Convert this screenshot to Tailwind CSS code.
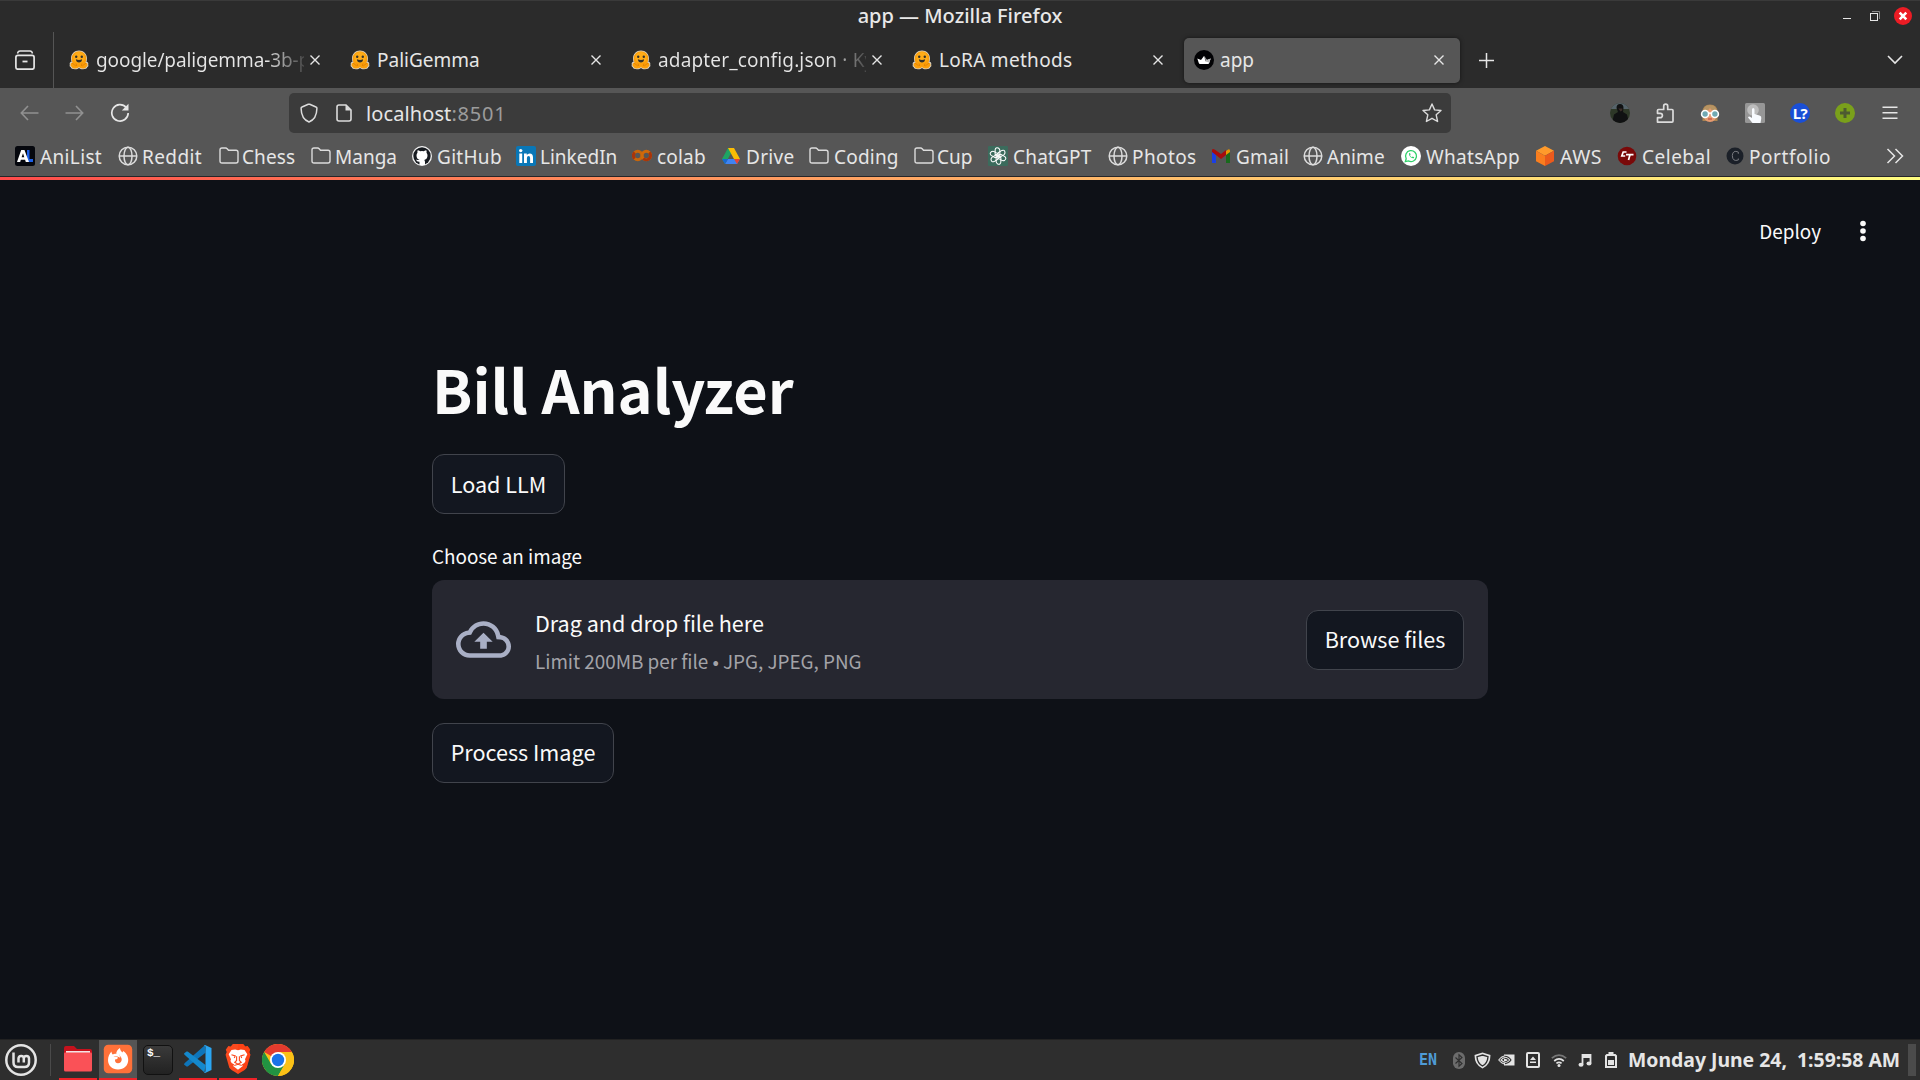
<!DOCTYPE html>
<html lang="en">
<head>
<meta charset="utf-8">
<title>app</title>
<script src="https://cdn.jsdelivr.net/npm/@tailwindcss/browser@4"></script>
</head>
<body class="h-[1080px] w-[1920px] overflow-hidden bg-[#0e1117] font-['Noto_Sans',sans-serif] text-[19px] text-[#e6e6e6]">

<!-- shared icons -->
<svg class="hidden">
  <symbol id="hug" viewBox="0 0 20 20">
    <path d="M10 .5C5.500.5 2 4 2 8.500c0 1.500.3 2.600.5 3.300C1 12 .3 13.500.8 14.700c-.5 1 0 2 .8 2.300.3 1.500 2 2.200 4.400 2.300 1.500.1 3-.3 4-1.200 1 .9 2.500 1.300 4 1.200 2.400-.1 4.100-.8 4.400-2.300.8-.3 1.300-1.300.8-2.300.5-1.200-.2-2.700-1.700-2.900.2-.7.5-1.800.5-3.300C18 4 14.500.5 10 .5z" fill="#d8d0c0"/>
    <path d="M10 1.200a7.300 7.300 0 0 0-7.300 7.300c0 2 .5 3.500 1 4.300C2.300 12.200 1.200 13.700 1.700 15c-.5.700.2 1.600 1 1.700.1 1.300 1.600 1.700 3.500 1.800 2 0 3.200-.6 3.800-1.700.6 1.100 1.800 1.700 3.800 1.700 1.900-.1 3.400-.5 3.500-1.800.8-.1 1.500-1 1-1.700.5-1.300-.6-2.800-2-2.200.5-.8 1-2.300 1-4.300A7.300 7.300 0 0 0 10 1.200z" fill="#fb9f0b"/>
    <circle cx="10" cy="7.600" r="5.600" fill="#ffac18"/>
    <circle cx="7.200" cy="6.800" r="1.200" fill="#33302a"/><circle cx="12.800" cy="6.800" r="1.200" fill="#33302a"/>
    <path d="M6.900 9.200c2 .9 4.200.9 6.200 0 0 2-1.400 3.300-3.100 3.300s-3.100-1.300-3.100-3.300z" fill="#33302a"/>
    <path d="M3 13l3.800 3M17 13l-3.800 3M7 13.500l.7 2.500M13 13.500l-.7 2.500" stroke="#e07d00" stroke-width=".8" fill="none"/>
  </symbol>
  <symbol id="close" viewBox="0 0 12 12"><path d="M1.500 1.500l9 9m0-9l-9 9" stroke="#e6e6e6" stroke-width="1.400" fill="none"/></symbol>
  <symbol id="folder" viewBox="0 0 20 20"><path d="M1 15V4q0-2 2-2h3.600q1 0 1.600.8L9.500 4.300H17q2 0 2 2V15q0 2-2 2H3q-2 0-2-2z" fill="none" stroke="#dcdcdc" stroke-width="1.400"/></symbol>
  <symbol id="globe" viewBox="0 0 20 20"><g fill="none" stroke="#dcdcdc" stroke-width="1.500"><circle cx="10" cy="10" r="8.800"/><ellipse cx="10" cy="10" rx="4" ry="8.800"/><path d="M1.200 10h17.600"/></g></symbol>
</svg>

<!-- window title -->
<div class="relative flex h-8 items-center justify-center border-t border-[#3a3a3a] bg-[#2b2b2b]">
  <div class="-mt-[2px] text-[20px] leading-7 font-medium text-[#e8e8e8]">app — Mozilla Firefox</div>
  <svg class="absolute top-0 right-0" width="90" height="32" viewBox="1830 1 90 32">
    <path d="M1843 18.500h8" stroke="#e6e6e6"/>
    <path d="M1872 11.500h7.500v7.500" stroke="#888" fill="none"/><rect x="1870.500" y="13.500" width="7" height="7" fill="none" stroke="#e6e6e6"/>
    <circle cx="1903" cy="16" r="9" fill="#ec1c24"/><path d="M1899.700 12.700l6.600 6.600m0-6.600l-6.600 6.600" stroke="#fff" stroke-width="2.600"/>
  </svg>
</div>

<!-- tabs -->
<div class="flex h-14 bg-[#2b2b2b]">
  <div class="flex w-[54px] items-center border-r border-[#555] pl-[15px]">
    <svg width="20" height="20" viewBox="0 0 20 20" fill="none" stroke="#e6e6e6" stroke-width="1.700"><rect x=".9" y="5.400" width="18.200" height="13.800" rx="2"/><path d="M2.500 3.500Q3 1 5 1h10q2 0 2.500 2.500" stroke-width="1.400"/><path d="M7.500 11.500h5" stroke-width="1.800"/></svg>
  </div>
  <div class="ml-[6px] flex h-[45px] w-[1400px] gap-[5px] self-center">
    <div class="flex w-[276px] items-center pr-[15px] pl-[9px]"><svg class="size-5 shrink-0"><use href="#hug"/></svg><span class="ml-[7px] w-[208px] overflow-hidden bg-linear-to-r from-[#e6e6e6] from-82% to-[#2b2b2b] to-104% bg-clip-text whitespace-nowrap tracking-[-0.1px] text-transparent">google/paligemma-3b-p</span><svg class="ml-[5px] size-3 shrink-0"><use href="#close"/></svg></div>
    <div class="flex w-[276px] items-center pr-[15px] pl-[9px]"><svg class="size-5 shrink-0"><use href="#hug"/></svg><span class="ml-[7px] w-[208px]">PaliGemma</span><svg class="ml-[6px] size-3 shrink-0"><use href="#close"/></svg></div>
    <div class="flex w-[276px] items-center pr-[15px] pl-[9px]"><svg class="size-5 shrink-0"><use href="#hug"/></svg><span class="ml-[7px] w-[209px] overflow-hidden bg-linear-to-r from-[#e6e6e6] from-82% to-[#2b2b2b] to-104% bg-clip-text whitespace-nowrap tracking-[0.15px] text-transparent">adapter_config.json · Ky</span><svg class="ml-[5px] size-3 shrink-0"><use href="#close"/></svg></div>
    <div class="flex w-[276px] items-center pr-[15px] pl-[9px]"><svg class="size-5 shrink-0"><use href="#hug"/></svg><span class="ml-[7px] w-[208px] tracking-[0.3px]">LoRA methods</span><svg class="ml-[6px] size-3 shrink-0"><use href="#close"/></svg></div>
    <div class="flex w-[276px] items-center rounded-[5px] bg-[#565656] pr-[15px] pl-[10px] shadow-[0_0_4px_#0008]">
      <svg class="size-5 shrink-0" viewBox="0 0 20 20"><circle cx="10" cy="10" r="10" fill="#020204"/><path d="M3.300 8.500L7 10l3-4 3 4 3.700-1.500-1.500 4.600q-.2.900-1.300.9H6.100q-1.100 0-1.300-.9z" fill="#fff"/><path d="M10 6l3 4-1.500 1.500z" fill="#777"/><path d="M16.700 8.500L13 10l-1.500 1.500 3.700 1z" fill="#bbb"/></svg>
      <span class="ml-[6px] w-[209px]">app</span><svg class="ml-[4px] size-3 shrink-0"><use href="#close"/></svg></div>
  </div>
  <div class="flex grow items-center justify-between pr-[17px] pl-[18px]">
    <svg width="17" height="17" viewBox="0 0 17 17" stroke="#e6e6e6" stroke-width="1.500"><path d="M8.500 1v15M1 8.500h15"/></svg>
    <svg width="16" height="10" viewBox="0 0 16 10" fill="none" stroke="#e6e6e6" stroke-width="1.600"><path d="M1 1l7 7 7-7"/></svg>
  </div>
</div>

<!-- toolbar -->
<div class="flex h-[49px] items-center bg-[#565656] pl-[20px]">
  <div class="flex w-[269px] items-center">
    <svg width="19" height="16" viewBox="0 0 19 16" fill="none" stroke="#919191" stroke-width="1.600"><path d="M18.500 8H1.500M8 1L1.300 8 8 15"/></svg>
    <svg class="ml-[26px]" width="19" height="16" viewBox="0 0 19 16" fill="none" stroke="#919191" stroke-width="1.600"><path d="M.5 8h17M11 1l6.700 7L11 15"/></svg>
    <svg class="ml-[26px]" width="20" height="20" viewBox="0 0 20 20" fill="none" stroke="#e6e6e6" stroke-width="1.700"><path d="M16.200 4.500A8.200 8.200 0 1 0 18.200 10"/><path d="M18.500.8v6.700h-6.700z" fill="#e6e6e6" stroke="none"/></svg>
  </div>
  <div class="flex h-10 w-[1162px] items-center rounded-[5px] bg-[#3b3b3b] pr-[9px] pl-[10px]">
    <svg width="20" height="20" viewBox="0 0 20 20" fill="none" stroke="#dcdcdc" stroke-width="1.500"><path d="M9.300 1.300Q10 1 10.700 1.300L17 4q1 .4.900 1.500C17.800 12 15 17 10 19 5 17 2.200 12 2.100 5.500 2 4.400 3 4 3 4z" stroke-linejoin="round"/></svg>
    <svg class="ml-[17px]" width="16" height="18" viewBox="0 0 16 18" fill="none" stroke="#dcdcdc" stroke-width="1.600"><path d="M3 1h7l5 5v9q0 2-2 2H3q-2 0-2-2V3q0-2 2-2z"/><path d="M9.500 1v5.500H15z" fill="#dcdcdc" stroke="none"/></svg>
    <span class="ml-[14px] pt-[2px] text-[20px] tracking-[0.1px]">localhost<span class="tracking-[0.8px] text-[#9c9c9c]">:8501</span></span>
    <svg class="ml-auto" width="20" height="20" viewBox="0 0 20 20" fill="none" stroke="#dcdcdc" stroke-width="1.400" stroke-linejoin="round"><path d="M10 1l2.600 5.900 6.400.6-4.800 4.300 1.400 6.700L10 15.300l-5.600 3.200 1.400-6.700L1 7.500l6.400-.6z"/></svg>
  </div>
  <div class="flex items-center gap-[25px] pl-[159px]">
    <svg width="20" height="20" viewBox="0 0 20 20"><clipPath id="av"><circle cx="10" cy="10" r="10"/></clipPath><g clip-path="url(#av)"><path d="M0 0h20v20H0z" fill="#2d3727"/><path d="M0 0h20v6H0z" fill="#56636a"/><path d="M2 20l2-8.500 4-2.500L6.500 5q0-4 3.500-4t3.500 4L13 9l4 2.500L19 20z" fill="#101112"/><path d="M8.300 5.500h4v2l-1.800 1z" fill="#3a2d28"/></g></svg>
    <svg width="20" height="20" viewBox="0 0 20 20" fill="none" stroke="#dcdcdc" stroke-width="1.700" stroke-linejoin="round"><path d="M2.500 19.100V14.700H5.200a2.200 2.200 0 0 0 0-4.400H2.500V7.500Q2.500 6.500 3.500 6.500H8.700V3.200a2 2 0 0 1 4 0V6.500H17q1 0 1 1V18q0 1.100-1 1.100z"/></svg>
    <svg width="20" height="20" viewBox="0 0 20 20"><path d="M2.500 18V9q0-7.500 7.500-7.500T17.500 9v9z" fill="#a98352"/><ellipse cx="10" cy="11.500" rx="7" ry="7.500" fill="#e59a70"/><path d="M3 9q.5-7 7-7t7 7q-5-.5-7-4-2 3.500-7 4z" fill="#b79463"/><g fill="#70a9b3" stroke="#fff" stroke-width="1.600"><circle cx="5.100" cy="11" r="3.500"/><circle cx="14.900" cy="11" r="3.500"/></g><path d="M8.300 10.500q1.700-1 3.400 0" stroke="#fff" stroke-width="1.500" fill="none"/><path d="M8 16h4" stroke="#c24c42" stroke-width="1.200"/></svg>
    <svg width="20" height="20" viewBox="0 0 20 20"><rect width="20" height="20" rx="1.500" fill="#969696"/><circle cx="8" cy="7" r="5.800" fill="#bdbdbd"/><path d="M7 6.500q0-1.500 1.200-1.500t1.300 1.500V11l5 1.500q2.200.7 1.800 2.800L15.500 20H7.500L3 14.500q.5-1.500 2-.8l2 1.300z" fill="#f8fbff"/></svg>
    <div class="flex size-5 items-center justify-center rounded-full bg-[#1a4fd6] text-[15px] leading-5 font-bold tracking-[-0.5px] text-white">L?</div>
    <svg width="20" height="20" viewBox="0 0 20 20"><circle cx="10" cy="10" r="10" fill="#7aa01b"/><path d="M10 5v10M5 10h10" stroke="#4d5a31" stroke-width="3"/></svg>
    <svg width="20" height="20" viewBox="0 0 20 20" stroke="#e6e6e6" stroke-width="1.600"><path d="M2.500 4.200h15M2.500 9.700h15M2.500 15.200h15"/></svg>
  </div>
</div>

<!-- bookmarks -->
<div class="flex h-[39px] items-center bg-[#565656] pb-[1px] pl-[15px] whitespace-nowrap [&_span]:pt-[2px]">
  <div class="flex w-[103px] items-center gap-[5px]"><svg class="size-5" viewBox="0 0 20 20"><rect width="20" height="20" rx="2.500" fill="#05070d"/><path d="M12 4h2.500v9H18v3h-6z" fill="#1c60e8"/><path d="M2 16L6.200 4H9.500L14 16h-3.200l-.7-2.200H5.800L5.200 16zM6.600 11.300h2.700L8 7.200z" fill="#fff"/></svg><span class="tracking-[0.35px]">AniList</span></div>
  <div class="flex w-[101px] items-center gap-[4px]"><svg class="size-5"><use href="#globe"/></svg><span class="tracking-[0.4px]">Reddit</span></div>
  <div class="flex w-[92px] items-center gap-[3px]"><svg class="size-5"><use href="#folder"/></svg><span class="tracking-[0.1px]">Chess</span></div>
  <div class="flex w-[101px] items-center gap-[4px]"><svg class="size-5"><use href="#folder"/></svg><span>Manga</span></div>
  <div class="flex w-[104px] items-center gap-[5px]"><svg class="size-5" viewBox="0 0 20 20"><circle cx="10" cy="10" r="10" fill="#f2f2f2"/><circle cx="10" cy="10" r="8.700" fill="#171b20"/><path d="M7.500 19v-3.200Q4.500 16 4 13.500q2 .8 3.700.5Q4.500 13 4.500 9.500q0-1.600 1-2.700-.4-1.300.2-2.600 1.200 0 2.500 1 1.800-.5 3.600 0 1.300-1 2.500-1 .6 1.300.2 2.600 1 1.100 1 2.700 0 3.500-3.200 4.500.7.800.7 2V19z" fill="#fff"/></svg><span class="tracking-[0.3px]">GitHub</span></div>
  <div class="flex w-[116px] items-center gap-[4px]"><svg class="size-5" viewBox="0 0 20 20"><rect width="20" height="20" rx="2" fill="#0977b7"/><g fill="#fff"><circle cx="4.700" cy="4.600" r="1.700"/><path d="M3.300 7.600h2.900V17H3.300zM8 7.600h2.800v1.300q.9-1.500 2.900-1.500 3.300 0 3.300 4V17h-2.900v-4.900q0-2.200-1.500-2.200-1.700 0-1.700 2.200V17H8z"/></g></svg><span>LinkedIn</span></div>
  <div class="flex w-[89px] items-center gap-[5px]"><svg class="size-5" viewBox="0 0 20 20" fill="none" stroke-width="3"><circle cx="5.700" cy="9.500" r="4.200" stroke="#c8660a"/><circle cx="14.300" cy="9.500" r="4.200" stroke="#d0690a"/><path d="M2.700 6.500a4.200 4.200 0 0 0 0 6M17.300 6.500a4.200 4.200 0 1 1-6 6" stroke="#a8350a"/></svg><span class="tracking-[0.2px]">colab</span></div>
  <div class="flex w-[88px] items-center gap-[5px]"><svg class="size-5" viewBox="0 0 20 20"><path d="M7 2h6l-3 5.200L4 18 1 13z" fill="#1fa463"/><path d="M7 2h6l6 11h-6z" fill="#fbbc04"/><path d="M7 13h12l-3 5H4z" fill="#3f83f2"/><path d="M7 13l-3 5-3-5z" fill="#1967d2"/><path d="M13 13h6l-3 5z" fill="#ea4335"/></svg><span class="tracking-[0.3px]">Drive</span></div>
  <div class="flex w-[105px] items-center gap-[5px]"><svg class="size-5"><use href="#folder"/></svg><span class="tracking-[0.2px]">Coding</span></div>
  <div class="flex w-[74px] items-center gap-[3px]"><svg class="size-5"><use href="#folder"/></svg><span>Cup</span></div>
  <div class="flex w-[120px] items-center gap-[5px]"><svg class="size-5" viewBox="0 0 20 20"><rect width="20" height="20" rx="1" fill="#3b6b5c"/><g fill="none" stroke="#fff" stroke-width="1.050"><path id="petal" d="M10 10.300V6.700l4-2.300q2.500-.9 3 1.900.1 1.300-.9 2.300L10 12.200"/><use href="#petal" transform="rotate(60 10 10)"/><use href="#petal" transform="rotate(120 10 10)"/><use href="#petal" transform="rotate(180 10 10)"/><use href="#petal" transform="rotate(240 10 10)"/><use href="#petal" transform="rotate(300 10 10)"/></g></svg><span class="tracking-[0.2px]">ChatGPT</span></div>
  <div class="flex w-[103px] items-center gap-[4px]"><svg class="size-5"><use href="#globe"/></svg><span class="tracking-[0.4px]">Photos</span></div>
  <div class="flex w-[92px] items-center gap-[5px]"><svg class="size-5" viewBox="0 0 20 20"><path d="M1 5l4 3v9H1z" fill="#1a3fe6"/><path d="M15 8l4-3v12h-4z" fill="#186a1c"/><path d="M15 5q4-3.500 4 0v1l-4 3z" fill="#e79700"/><path d="M1 6V4.500Q1 2 4 3.700L10 8l5-4v5l-5 4-5-4z" fill="#a80c0c"/></svg><span class="tracking-[0.2px]">Gmail</span></div>
  <div class="flex w-[98px] items-center gap-[4px]"><svg class="size-5"><use href="#globe"/></svg><span class="tracking-[0.1px]">Anime</span></div>
  <div class="flex w-[134px] items-center gap-[5px]"><svg class="size-5" viewBox="0 0 20 20"><circle cx="10" cy="10" r="10" fill="#fff"/><path d="M4.300 15.700l.9-3A5.500 5.500 0 1 1 7.400 14.900z" fill="none" stroke="#2fd069" stroke-width="1.300"/><path d="M8 7.200q-.3 2 1.400 3.700t3.400 1.400l.4-1-1.500-.8-.8.700q-1.300-.6-1.900-1.900l.6-.8L9 7z" fill="#2fd069"/></svg><span class="tracking-[0.3px]">WhatsApp</span></div>
  <div class="flex w-[82px] items-center gap-[5px]"><svg class="size-5" viewBox="0 0 20 20"><path d="M10 0l9 4.700-9 5-9-5z" fill="#ff9a2b"/><path d="M1 4.700l9 5V20l-9-4.800z" fill="#fa7e1e"/><path d="M19 4.700l-9 5V20l9-4.800z" fill="#ec5a1c"/></svg><span class="text-[19.5px] tracking-[0.5px]">AWS</span></div>
  <div class="flex w-[108px] items-center gap-[5px]"><svg class="size-5" viewBox="0 0 20 20"><circle cx="10" cy="10" r="9.300" fill="#7a0909"/><path d="M9.500 6H6.200L4.800 10h3.400" fill="none" stroke="#fff" stroke-width="1.700"/><path d="M9 8.700h7.500M13 8.700L11.500 14" fill="none" stroke="#fff" stroke-width="1.700"/></svg><span class="tracking-[0.5px]">Celebal</span></div>
  <div class="flex w-[161px] items-center gap-[4px]"><svg class="size-5" viewBox="0 0 20 20"><circle cx="10" cy="10" r="8.500" fill="#1b2028"/><path d="M13.300 7.800V6q-5.500-2.300-6 3.500.2 6.500 6 4.500v-1.500" fill="none" stroke="#77797e" stroke-width="1"/></svg><span class="tracking-[0.55px]">Portfolio</span></div>
  <svg width="18" height="16" viewBox="0 0 18 16" fill="none" stroke="#e6e6e6" stroke-width="1.500"><path d="M1.500 1l7 7-7 7M9.500 1l7 7-7 7"/></svg>
</div>
<div class="h-px bg-[#262629]"></div>
<div class="h-[3px] bg-linear-to-r from-[#ff4b4b] to-[#fffd80]"></div>

<!-- page -->
<div class="relative h-[859px] font-['Noto_Sans_CJK_JP',sans-serif] text-[#fafafa]">
  <header class="absolute top-9 right-[50px] flex h-[30px] items-center text-[18.9px] leading-[30px]">
    <span>Deploy</span>
    <svg class="ml-[35px]" width="14" height="24" viewBox="0 0 14 24" fill="#fafafa"><circle cx="7" cy="4.500" r="2.800"/><circle cx="7" cy="12" r="2.800"/><circle cx="7" cy="19.500" r="2.800"/></svg>
  </header>
  <main class="mx-auto w-[1056px] pt-[168px]">
    <h1 class="h-20 text-[59.4px] leading-[80px] font-bold">Bill Analyzer</h1>
    <button class="mt-[26px] flex h-[60px] w-[133px] items-center justify-center rounded-xl border border-[#41444c] bg-[#131720] text-[21.6px]">Load LLM</button>
    <div class="mt-[26px] h-8 text-[18.9px] leading-8 tracking-[-0.03px]">Choose an image</div>
    <section class="mt-2 flex h-[119px] items-center rounded-xl bg-[#262730] px-6">
      <svg width="55" height="55" viewBox="0 0 24 24" fill="#a9afc5"><path d="M19.350 10.040A7.490 7.490 0 0 0 12 4C9.110 4 6.600 5.640 5.350 8.040A5.994 5.994 0 0 0 0 14c0 3.310 2.690 6 6 6h13c2.760 0 5-2.240 5-5 0-2.640-2.050-4.780-4.650-4.960zM19 18H6c-2.210 0-4-1.790-4-4 0-2.050 1.530-3.760 3.560-3.970l1.070-.110.500-.950A5.469 5.469 0 0 1 12 6c2.620 0 4.880 1.860 5.390 4.430l.300 1.500 1.530.110A2.980 2.980 0 0 1 22 15c0 1.650-1.350 3-3 3zM8 13h2.550v3h2.900v-3H16l-4-4z"/></svg>
      <div class="ml-6 flex flex-col pt-[4px]">
        <span class="text-[21.6px] leading-[38px] tracking-[-0.02px]">Drag and drop file here</span>
        <span class="text-[18.9px] leading-[38px] tracking-[-0.03px] text-[#a3a3a8]">Limit 200MB per file • JPG, JPEG, PNG</span>
      </div>
      <button class="ml-auto flex h-[60px] w-[158px] items-center justify-center rounded-xl border border-[#41444c] bg-[#131720] text-[21.6px]">Browse files</button>
    </section>
    <button class="mt-6 flex h-[60px] w-[182px] items-center justify-center rounded-xl border border-[#41444c] bg-[#131720] pb-[2px] text-[21.6px]">Process Image</button>
  </main>
</div>

<!-- taskbar -->
<div class="flex h-[41px] items-center border-t border-[#222] bg-[#2e2e2e]">
  <svg class="ml-[5px]" width="32" height="32" viewBox="0 0 32 32" fill="none" stroke="#e4e4e4"><circle cx="16" cy="16" r="14.700" stroke-width="2.500"/><path d="M8.500 8.500v10q0 4.500 4.500 4.500h6.500q4.500 0 4.500-4.500v-4q0-2.600-2.600-2.600T18.800 14.500v4M18.800 18.500v-4q0-2.600-2.600-2.600T13.500 14.500v4" stroke-width="2.500"/></svg>
  <div class="ml-[13px] h-8 w-px bg-[#4a4a4a]"></div>
  <div class="ml-2 flex h-10 gap-[2px]">
    <div class="flex w-[38px] items-center justify-center border-b-2 border-[#ee2228]"><svg width="30" height="30" viewBox="0 0 30 30"><path d="M1 4q0-2 2-2h8l3 3h13q2 0 2 2v8H1z" fill="#c5121d"/><path d="M3 7h24v4H3z" fill="#f3e4e6"/><path d="M1 9.500q0-1 1-1h26q1 0 1 1V26q0 1.500-1.500 1.500h-25Q1 27.500 1 26z" fill="#fa5157"/></svg></div>
    <div class="flex w-[38px] items-center justify-center border-b-2 border-[#ee2228] bg-[#555]"><svg width="30" height="30" viewBox="0 0 30 30"><rect x=".8" y=".8" width="28.400" height="28.400" rx="4.500" fill="#ff7139"/><path d="M15 25.500C9 25.500 5 21.500 5 16c0-3.500 1.500-6.500 3.500-8.500 0 1.300.5 2.300 1.300 3 1-.7 2.200-.9 3.500-.6C13 8 14.500 5.500 17 4c0 2 1 3 2.500 4.500L20.200 7C24 9.500 25.200 13 25.200 16c0 5.500-4.200 9.500-10.200 9.500z" fill="#fff"/><path d="M10.300 12.700q2.200-.7 4 .3 1 .8.300 1.500-1 .8-2.600 1c-.3 2.300 1 3.700 3 3.700s3.800-1.500 3.700-3.700c0-1.500-.8-2.700-1.700-3.500l-1-2.200 1.300 4-3.500-1.500z" fill="#ff7139"/></svg></div>
    <div class="flex w-[38px] items-center justify-center"><div class="relative size-[30px] rounded-[5px] border border-[#111] bg-linear-to-b from-[#3a3a3a] to-[#222]"><span class="absolute top-px left-[3px] font-['Liberation_Mono',monospace] text-[11px] leading-3 font-bold text-white">$_</span></div></div>
    <div class="flex w-[38px] items-center justify-center border-b-2 border-[#ee2228]"><svg width="30" height="30" viewBox="0 0 30 30"><path d="M22 1l-1 1L1.500 19.200 1 20.500l2.500 2 1.200 0L22.500 8.800z" fill="#0e75ba"/><path d="M21.500 28.500L1.500 10.800 1 9.500l2.500-2h1.200L22.500 21z" fill="#1488cc"/><path d="M22 1l6.500 3v22L22 29q-.8-.2-1-1 1.500.5 1.500-1V3q0-1.500-1.500-1 .3-.7 1-1z" fill="#2aa6f2"/></svg></div>
    <div class="flex w-[38px] items-center justify-center border-b-2 border-[#ee2228]"><svg width="28" height="32" viewBox="0 0 30 34"><path d="M9.500 1h11l2.300 2.600 2.500-.4 2.800 3.800-1 2.500 1.200 3-4 14Q23.500 28.500 15 33 6.500 28.500 5.700 26.500l-4-14 1.200-3-1-2.500 2.800-3.800 2.500.4z" fill="#fb4a1e"/><path d="M15 1h5.500l2.300 2.600 2.500-.4 2.800 3.800-1 2.500 1.200 3-4 14Q23.500 28.500 15 33z" fill="#ff3a0c" opacity=".5"/><path d="M15 7.500l3-.7 4 .5 3 4.500-2.500 5.500q1.500 2-.7 4L19 23l1.200 1.500-5.200 4-5.200-4L11 23l-2.800-1.700q-2.200-2-.7-4L5 11.800l3-4.500 4-.5z" fill="#fff"/><path d="M8 12.500l4 1.200-1 2.300M22 12.500l-4 1.200 1 2.300M13.500 14v4.500l-2 2L15 22.500l3.500-2-2-2V14M11 24l4-1.300 4 1.300" fill="none" stroke="#fb4a1e" stroke-width="1.200"/></svg></div>
    <div class="flex w-[38px] items-center justify-center"><svg width="32" height="32" viewBox="0 0 32 32"><circle cx="16" cy="16" r="16" fill="#fbc116"/><path d="M16 16L2.140 8A16 16 0 0 1 29.860 8z" fill="#e33b2e"/><path d="M2.140 8A16 16 0 0 0 16 32L22.900 20 16 16 9.100 20z" fill="#229342"/><path d="M29.860 8H16v8l6.900 4L16 32A16 16 0 0 0 29.860 8z" fill="#fbc116"/><circle cx="16" cy="16" r="8" fill="#fff"/><circle cx="16" cy="16" r="6.200" fill="#1a73e8"/></svg></div>
  </div>
  <div class="ml-auto flex items-center pr-1">
    <span class="w-[34px] font-['DejaVu_Sans_Mono',monospace] text-[15px] leading-5 font-bold text-[#4f9bd6]">EN</span>
    <svg width="12" height="17" viewBox="0 0 12 17"><rect width="12" height="17" rx="5.800" fill="#6c6c6c"/><path d="M2.500 5.500l6.500 6-3 2.700V2.800L9 5.500l-6.500 6" fill="none" stroke="#2e2e2e" stroke-width="1.100"/></svg>
    <svg class="ml-[9px]" width="17" height="17" viewBox="0 0 17 17"><path d="M8.500.5l8 2.500q0 10-8 13.500Q.5 13 .5 3z" fill="#e4e4e4"/><path d="M8.500 3l5.500 1.700q-.4 6.500-5.500 9.300Q3.400 11.200 3 4.700z" fill="none" stroke="#2e2e2e" stroke-width="1.400"/></svg>
    <svg class="ml-[7px]" width="17" height="12" viewBox="0 0 17 12"><path d="M6 .5h10.500v11H6z" fill="#e4e4e4"/><path d="M.8 6Q3.500 2 7.500 2q4 0 6 4-2.500 4-6 4T.8 6zM3 6q2-2.500 4.500-2.300Q10 4 11 6q-1.500 2.300-3.500 2.300T3 6z" fill="none" stroke="#e4e4e4" stroke-width="1.200"/><path d="M6.300 2.200Q10.500 2 13 6q-2.500 3.500-6 3.700M6.300 4.200Q9 4 10.500 6 9 7.800 6.300 8" fill="none" stroke="#2e2e2e" stroke-width="1.100"/></svg>
    <svg class="ml-[11px]" width="14" height="16" viewBox="0 0 14 16"><rect x="1" y="1" width="12" height="14" rx="1" fill="none" stroke="#e4e4e4" stroke-width="2"/><path d="M7 4.500L10 8H4zM4 9.500h6v1.500H4z" fill="#e4e4e4"/></svg>
    <svg class="ml-[11px]" width="16" height="13" viewBox="0 0 16 13" fill="none" stroke-width="1.700"><path d="M.8 4.200Q8-2 15.200 4.200" stroke="#777"/><path d="M3.200 7Q8 2.700 12.800 7M5.400 9.400q2.600-2.200 5.200 0" stroke="#e4e4e4"/><circle cx="8" cy="11.500" r="1.500" fill="#e4e4e4" stroke="none"/></svg>
    <svg class="ml-[11px]" width="14" height="14" viewBox="0 0 14 14"><path d="M4.500 11.500V2h8v8M4.500 4h8" fill="none" stroke="#e4e4e4" stroke-width="1.800"/><ellipse cx="3" cy="11.800" rx="2.500" ry="2" fill="#e4e4e4"/><ellipse cx="11" cy="10.500" rx="2.500" ry="2" fill="#e4e4e4"/></svg>
    <svg class="ml-[13px]" width="12" height="16" viewBox="0 0 12 16"><path d="M3.500 0h5v2h2L12 3.500V16H0V3.500L1.500 2h2zM2 4.500V14h8V4.500L9.300 4H2.700z" fill="#e4e4e4" fill-rule="evenodd"/><path d="M3 8h6v5H3z" fill="#e4e4e4"/></svg>
    <span class="ml-[11px] w-[280px] text-[19.4px] font-bold whitespace-pre text-[#e6e6e6]">Monday June 24,  1:59:58 AM</span>
    <div class="h-8 w-2 bg-[#4b4b4b]"></div>
  </div>
</div>
</body>
</html>
